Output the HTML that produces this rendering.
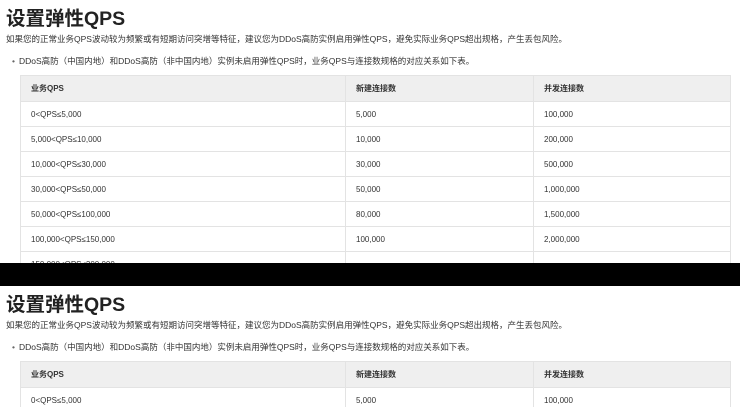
<!DOCTYPE html>
<html><head><meta charset="utf-8"><style>
body{margin:0;width:740px;height:407px;overflow:hidden;background:#fff;font-family:"Liberation Sans","Noto Sans CJK SC",sans-serif;color:#333;position:relative}
.p{position:absolute;left:0;width:740px;overflow:hidden;background:#fff}
h1{position:absolute;left:6px;top:2px;margin:0;font-size:19.5px;font-weight:bold;color:#222}
.d{position:absolute;left:6px;top:33px;font-size:8.5px;color:#333;white-space:nowrap}
.b{position:absolute;left:12px;top:55px;font-size:8.5px;white-space:nowrap}
.b:before{content:"•";margin-right:4px;color:#666}
table{position:absolute;left:20px;top:75px;width:711px;border-collapse:collapse;font-size:8px}
td,th{border:1px solid #e3e3e3;height:24px;padding:0 0 0 10px;text-align:left;color:#333}
th{background:#efefef;font-weight:bold;height:25px}
</style></head><body>
<div class="p" style="top:0;height:263px">
<h1>设置弹性QPS</h1>
<div class="d">如果您的正常业务QPS波动较为频繁或有短期访问突增等特征，建议您为DDoS高防实例启用弹性QPS，避免实际业务QPS超出规格，产生丢包风险。</div>
<div class="b">DDoS高防（中国内地）和DDoS高防（非中国内地）实例未启用弹性QPS时，业务QPS与连接数规格的对应关系如下表。</div>
<table><tr><th style="width:314px">业务QPS</th><th style="width:177px">新建连接数</th><th>并发连接数</th></tr>
<tr><td>0&lt;QPS≤5,000</td><td>5,000</td><td>100,000</td></tr>
<tr><td>5,000&lt;QPS≤10,000</td><td>10,000</td><td>200,000</td></tr>
<tr><td>10,000&lt;QPS≤30,000</td><td>30,000</td><td>500,000</td></tr>
<tr><td>30,000&lt;QPS≤50,000</td><td>50,000</td><td>1,000,000</td></tr>
<tr><td>50,000&lt;QPS≤100,000</td><td>80,000</td><td>1,500,000</td></tr>
<tr><td>100,000&lt;QPS≤150,000</td><td>100,000</td><td>2,000,000</td></tr>
<tr><td>150,000&lt;QPS≤200,000</td><td></td><td></td></tr>
</table></div>
<div style="position:absolute;left:0;top:263px;width:740px;height:23px;background:#000"></div>
<div class="p" style="top:286px;height:121px">
<h1>设置弹性QPS</h1>
<div class="d">如果您的正常业务QPS波动较为频繁或有短期访问突增等特征，建议您为DDoS高防实例启用弹性QPS，避免实际业务QPS超出规格，产生丢包风险。</div>
<div class="b">DDoS高防（中国内地）和DDoS高防（非中国内地）实例未启用弹性QPS时，业务QPS与连接数规格的对应关系如下表。</div>
<table><tr><th style="width:314px">业务QPS</th><th style="width:177px">新建连接数</th><th>并发连接数</th></tr>
<tr><td>0&lt;QPS≤5,000</td><td>5,000</td><td>100,000</td></tr>
</table></div>
</body></html>
